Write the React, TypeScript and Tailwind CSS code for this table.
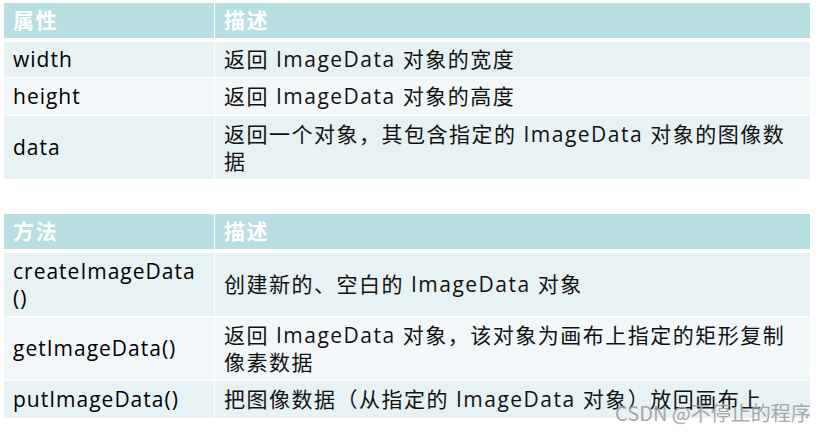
import React from 'react';

type Row = {
  name: string;
  desc: string;
  h: string;
  bg: string;
};

const propRows: Row[] = [
  { name: 'width', desc: '返回 ImageData 对象的宽度', h: 'h-[35px]', bg: 'bg-[#e7f2f4]' },
  { name: 'height', desc: '返回 ImageData 对象的高度', h: 'h-[37px]', bg: 'bg-[#f2f8fa]' },
  { name: 'data', desc: '返回一个对象，其包含指定的 ImageData 对象的图像数据', h: 'h-[63px]', bg: 'bg-[#e7f2f4]' },
];

const methodRows: Row[] = [
  { name: 'createImageData\u200B()', desc: '创建新的、空白的 ImageData 对象', h: 'h-[63px]', bg: 'bg-[#e7f2f4]' },
  { name: 'getImageData()', desc: '返回 ImageData 对象，该对象为画布上指定的矩形复制像素数据', h: 'h-[63px]', bg: 'bg-[#f2f8fa]' },
  { name: 'putImageData()', desc: '把图像数据（从指定的 ImageData 对象）放回画布上', h: 'h-[37px]', bg: 'bg-[#e7f2f4]' },
];

const font = { fontFamily: '"Open Sans", "Noto Sans CJK SC", sans-serif' };

const Table = ({ head, rows }: { head: string; rows: Row[] }) => (
  <div className="w-[806px] grid grid-cols-[210px_1fr] gap-x-px">
    <div className="h-[35px] bg-[#b9dfe3] flex items-center pl-[9px] text-white font-bold text-[21px] tracking-[1.5px]">
      {head}
    </div>
    <div className="h-[35px] bg-[#b9dfe3] flex items-center pl-[9px] text-white font-bold text-[21px] tracking-[1.5px]">
      描述
    </div>
    <div className="col-span-2 h-[4px]" />
    {rows.map((r, i) => (
      <React.Fragment key={r.name}>
        <div className={`${r.h} ${r.bg} ${i > 0 ? 'mt-px' : ''} flex items-center pl-[9px] pr-3 text-[21px] leading-[27px] text-black tracking-[1px]`}>
          {r.name}
        </div>
        <div className={`${r.h} ${r.bg} ${i > 0 ? 'mt-px' : ''} flex items-center pl-[9px] pr-2 text-[21px] leading-[27px] text-[#111] tracking-[1.5px]`}>
          {r.desc}
        </div>
      </React.Fragment>
    ))}
  </div>
);

export default function App() {
  return (
    <div className="relative w-[823px] h-[433px] bg-white overflow-hidden" style={font}>
      <div className="pt-[3px] pl-[4px] flex flex-col gap-[35px]">
        <Table head="属性" rows={propRows} />
        <Table head="方法" rows={methodRows} />
      </div>
      <div className="absolute left-[615px] top-[403px] text-[20px] leading-[20px] text-[#a0a0a0] opacity-90 whitespace-nowrap" style={{ fontFamily: '"Noto Sans CJK SC", sans-serif' }}>
        CSDN @不停止的程序
      </div>
    </div>
  );
}
